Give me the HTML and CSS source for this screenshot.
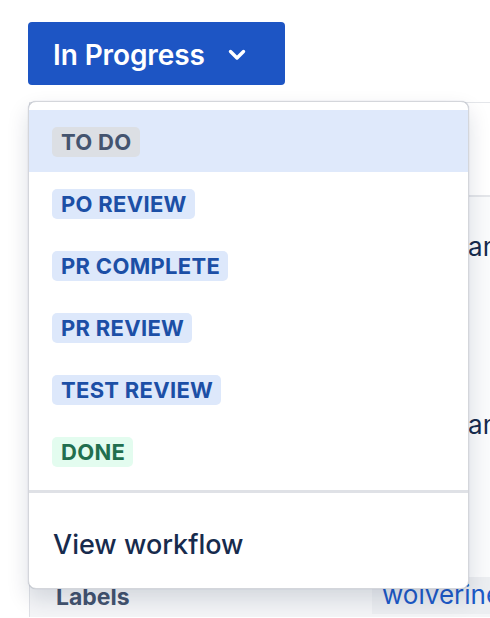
FILE: index.html
```html
<!DOCTYPE html>
<html>
<head>
<meta charset="utf-8">
<link rel="stylesheet" href="styles.css">
</head>
<body>
<div class="page">
  <button class="status-btn">
    <span class="status-label">In Progress</span>
    <svg class="chev" width="18" height="12" viewBox="0 0 18 12"><path d="M2.5 2.5 L9 9 L15.5 2.5" fill="none" stroke="#fff" stroke-width="3.4" stroke-linecap="round" stroke-linejoin="round"/></svg>
  </button>

  <div class="details">
    <div class="detail-row first"></div>
    <div class="detail-row text-row"><span class="val">an</span></div>
    <div class="detail-row text-row second"><span class="val">an</span></div>
    <div class="detail-row labels-row">
      <span class="lbl">Labels</span>
      <span class="tag">wolverine</span>
    </div>
  </div>

  <div class="menu">
    <div class="menu-section">
      <div class="item selected"><span class="loz grey">TO DO</span></div>
      <div class="item"><span class="loz blue">PO REVIEW</span></div>
      <div class="item"><span class="loz blue">PR COMPLETE</span></div>
      <div class="item"><span class="loz blue">PR REVIEW</span></div>
      <div class="item"><span class="loz blue">TEST REVIEW</span></div>
      <div class="item"><span class="loz green">DONE</span></div>
    </div>
    <div class="menu-section footer">
      <div class="item link">View workflow</div>
    </div>
  </div>
</div>
</body>
</html>
```
FILE: styles.css
```css
* { box-sizing: border-box; }
html, body { margin: 0; padding: 0; background: #fff; }
body { font-family: Inter, "Noto Sans", sans-serif; }
.page {
  position: relative;
  width: 490px;
  height: 618px;
  overflow: hidden;
  padding: 22px 0 0 28px;
}
.status-btn {
  display: flex;
  align-items: center;
  width: 257px;
  height: 63px;
  padding: 2px 0 0 25px;
  border: none;
  border-radius: 4px;
  background: #1d55c4;
  color: #fff;
  font-family: Inter, "Noto Sans", sans-serif;
  font-size: 28px;
  font-weight: 600;
  letter-spacing: -0.1px;
  cursor: pointer;
}
.chev { margin-left: 23px; margin-top: 1px; }

.details {
  margin-top: 17px;
  margin-left: 1px;
  border-left: 1px solid #dfe1e6;
  border-top: 1px solid #e4e6ea;
  background: #fafbfc;
}
.detail-row { display: flex; align-items: center; }
.detail-row.first { height: 94px; background: #fff; border-bottom: 2px solid #e4e6ea; }
.text-row { height: 90px; justify-content: flex-end; padding-top: 8px; }
.text-row.second { height: 290px; padding-top: 122px; align-items: flex-start; }
.val { font-size: 26px; color: #172b4d; margin-right: -8px; }
.labels-row { height: 40px; padding: 0 0 0 26px; align-items: flex-start; justify-content: space-between; background: #f4f5f7; }
.lbl { font-size: 23px; font-weight: 700; color: #44546f; margin-top: 6px; }
.tag {
  background: #eceef1;
  color: #1d5ac8;
  font-size: 26px;
  padding: 2px 0 4px 10px;
  width: 118px;
  border-radius: 4px 0 0 0;
  white-space: nowrap;
  overflow: hidden;
}

.menu {
  position: absolute;
  left: 28px;
  top: 101px;
  width: 441px;
  background: #fff;
  border: 1px solid #d4d6db;
  border-radius: 8px;
  box-shadow: 0 10px 22px rgba(9, 30, 66, 0.14), 0 0 1px rgba(9, 30, 66, 0.3);
  overflow: hidden;
}
.menu-section { padding: 8px 0; }
.menu-section.footer { border-top: 3px solid #dfe1e6; padding: 8px 0 7px; }
.item {
  height: 62px;
  display: flex;
  align-items: center;
  padding-left: 23px;
}
.item.selected { background: #dfe9fb; }
.item.link {
  height: 80px;
  font-size: 27px;
  font-weight: 500;
  color: #172b4d;
  padding-left: 24px;
  padding-top: 6px;
}
.loz {
  display: inline-block;
  height: 30px;
  line-height: 31px;
  margin-top: 2px;
  padding: 0 8px 0 9px;
  border-radius: 5px;
  font-size: 22px;
  font-weight: 700;
  letter-spacing: 0.3px;
  text-transform: uppercase;
}
.loz.grey { background: #dcdfe4; color: #44546f; }
.loz.blue { background: #dde8fb; color: #1c4fa6; }
.loz.green { background: #e3fcef; color: #216e4e; }
```
